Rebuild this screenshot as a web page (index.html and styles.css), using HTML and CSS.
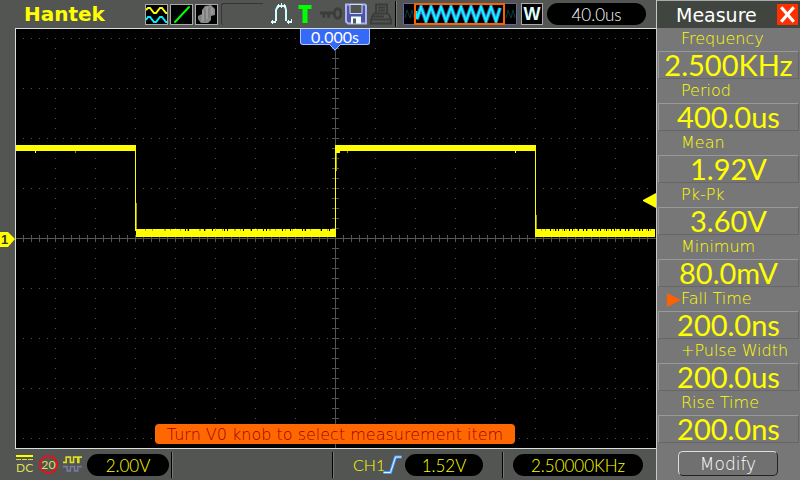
FILE: index.html
```html
<!DOCTYPE html>
<html lang="en">
<head>
<meta charset="utf-8">
<meta name="viewport" content="width=device-width, initial-scale=1">
<title>Hantek oscilloscope</title>
<link rel="stylesheet" href="styles.css">
</head>
<body>
<div class="device">
  <main class="scope">
    <header class="topbar">
      <h1 class="brand">Hantek</h1>
      <div class="tiles">
        <svg class="tile" viewBox="0 0 21 19" aria-label="Channels">
          <path d="M0 5l2-2h2l4 5h2l4-5h2l4 5h1" fill="none" stroke="#ff0" stroke-width="2"/>
          <path d="M0 15l2-3h2l4 5h2l4-5h2l4 5h1" fill="none" stroke="#0ef" stroke-width="2"/>
        </svg>
        <svg class="tile" viewBox="0 0 21 19" aria-label="Vectors"><path d="M4 17L18 2" stroke="#0f0" stroke-width="2" stroke-linecap="round"/></svg>
        <svg class="tile" viewBox="0 0 21 19" aria-label="Persistence">
          <path d="M2 11l4-2V5l3-4 6-1 4 4v6l-4 1v4l-3 3H5l-3-4z" fill="#888"/>
          <path d="M7 6v10M11 2v12M16 3v6" stroke="#999" stroke-width="2"/>
          <path d="M9 5v12M13 3v10M4 11v5" stroke="#777"/>
        </svg>
      </div>
      <span class="slot"></span>
      <div class="status">
        <svg class="icon" viewBox="0 0 22 22" aria-label="Peak detect">
          <path d="M0 19h4M5 18V7l2-4h7l1 4v11M16 19h5" fill="none" stroke="#cff" stroke-width="2"/>
          <path d="M1.500 17v4M4.500 16v4M7.500 1v4M10.500 0v5M13.500 1v4M17.500 17v4M20.500 16v4" stroke="#dff"/>
        </svg>
        <svg class="icon icon-t" viewBox="0 0 13 18" aria-label="Triggered"><path d="M0 0h13v4H9v14H4V4H0z" fill="#0f0"/></svg>
        <svg class="icon" viewBox="0 0 23 14" aria-label="Key lock">
          <path d="M0 6h15M4 7v4M9 7v4" stroke="#3b3d3b" stroke-width="3" fill="none"/>
          <ellipse cx="18.500" cy="6.500" rx="3.500" ry="5" fill="none" stroke="#3b3d3b" stroke-width="3"/>
        </svg>
        <svg class="icon" viewBox="0 0 22 21" aria-label="Save">
          <path d="M1 1h19l1 1v18H3l-2-2z" fill="#5054a4" stroke="#aab4f4" stroke-width="2"/>
          <path d="M5 1h12v9H5z" fill="#535553" stroke="#cdf"/>
          <path d="M6 13h10v7H6z" fill="#eff"/><path d="M8 15h3v5H8z" fill="#555"/>
        </svg>
        <svg class="icon" viewBox="0 0 22 21" aria-label="Print">
          <path d="M6 10V1h11v9M8 4h7M8 7h7M4 10h14l2 3v3H2v-3zM1 16h20v4H1zM3 13h11" fill="none" stroke="#3b3d3b" stroke-width="2"/>
        </svg>
      </div>
      <span class="rule"></span>
      <svg class="memory" viewBox="0 0 114 22" aria-label="Record position">
        <path d="M.5 .5h113v21H.5z" fill="#000" stroke="#6565a5"/>
        <path d="M2 15l2-8 3 8 2-8 2 8M103 15l2-8 3 8 2-8 2 8" fill="none" stroke="#063b46"/>
        <path d="M12 1h90v20H12z" fill="#000"/>
        <path d="M13 8l1 8 4-12 5 14 5-14 5 14 5-14 5 14 5-14 5 14 5-14 5 14 5-14 5 14 5-14 5 14 5-14 5 14 4-13" fill="none" stroke="#4866c8" stroke-width="4"/>
        <path d="M13 8l1 8 4-12 5 14 5-14 5 14 5-14 5 14 5-14 5 14 5-14 5 14 5-14 5 14 5-14 5 14 5-14 5 14 4-13" fill="none" stroke="#0ff" stroke-width="2"/>
        <path d="M12 1h89v20H12z" fill="none" stroke="#ff6000" stroke-width="2"/>
      </svg>
      <span class="window">W</span>
      <output class="pill pill-time">40.0us</output>
    </header>

    <section class="display">
      <svg class="plot" viewBox="0 0 656 421" aria-label="Channel 1 square wave">
        <path d="M15 0h641v421H15z" fill="#000"/>
        <g stroke="#555" fill="none" shape-rendering="crispEdges">
          <path stroke-dasharray="1 7" d="M23 10.500H655M23 60.500H655M23 110.500H655M23 160.500H655M23 260.500H655M23 310.500H655M23 360.500H655M23 410.500H655"/>
          <path stroke-dasharray="1 9" d="M55.500 10V411M95.500 10V411M135.500 10V411M175.500 10V411M215.500 10V411M255.500 10V411M295.500 10V411M375.500 10V411M415.500 10V411M455.500 10V411M495.500 10V411M535.500 10V411M575.500 10V411M615.500 10V411"/>
          <path d="M16 210.500H656M335.500 1V420"/>
          <path stroke-width="7" stroke-dasharray="1 7" d="M23 210.500H655"/>
          <path stroke-width="7" stroke-dasharray="1 9" d="M335.500 10V415"/>
        </g>
        <path d="M15.500 421V.5H656M15 420.500H656" fill="none" stroke="#d8dfd8" shape-rendering="crispEdges"/>
        <g fill="#ff0" shape-rendering="crispEdges">
          <path d="M16 117H136V123H16zM336 117H536V123H336zM136 203H336V209H136zM536 203H655V209H536z"/>
          <path d="M135 117h1v86h-1zM335 117h1v92h-1zM535 117h1v92h-1zM336 123h4v2h-4zM35 123h1v2h-1zM515 123h1v2h-1z"/>
          <path fill="#a09a00" d="M136 175h1v26h-1zM336 125h1v18h-1zM536 187h1v14h-1zM75 123h1v2h-1zM347 123h1v2h-1z"/>
        </g>
        <g fill="none" stroke-width="2" shape-rendering="crispEdges">
          <path stroke="#b8b000" d="M136 202H336M536 202H655"/>
          <path stroke="#ff0" stroke-dasharray="9 1 6 1 11 2 4 1" d="M136 202H336"/>
          <path stroke="#ff0" stroke-dasharray="5 1 3 1 7 1 2 1" d="M536 202H655"/>
          <path stroke="#000" stroke-dasharray="1 2 1 15 1 7 1 11" d="M185 202H334"/>
          <path stroke="#000" stroke-dasharray="1 4 1 2 1 5" d="M550 202H653"/>
        </g>
        <path d="M0 204h8l7 7-7 8H0z" fill="#ff0"/>
        <text class="marker" x="1" y="216">1</text>
        <path d="M656 165v15l-13-7v-1z" fill="#ff0"/>
      </svg>
      <div class="delay">0.000s<svg class="delay-tip" viewBox="0 0 12 7"><path d="M0 0h12L6 7z" fill="#3569f7"/><path d="M0 0l6 6 6-6" fill="none" stroke="#a8c8ff"/></svg></div>
      <p class="message">Turn V0 knob to select measurement item</p>
    </section>

    <footer class="bottombar">
      <div class="channel">
        <svg class="icon" viewBox="0 0 19 19" aria-label="DC coupling">
          <path d="M1 1h17" stroke="#ff0" stroke-width="2"/><path d="M1 4.500h17" stroke="#dd3" stroke-dasharray="5 1"/>
          <text class="dc" x="1" y="17">DC</text>
        </svg>
        <svg class="icon" viewBox="0 0 20 20" aria-label="20 MHz bandwidth limit">
          <circle cx="10" cy="10" r="9" fill="none" stroke="#e8101c" stroke-width="2"/>
          <text class="bw" x="10" y="15" text-anchor="middle">20</text>
        </svg>
        <svg class="icon" viewBox="0 0 18 16" aria-label="Digital filter">
          <path d="M0 6h3V1h4v5h3V1h4v5h1V1h3" fill="none" stroke="#dd2" stroke-width="1.5"/>
          <path d="M0 10h4v4h3v-4h4v4h3v-4h4" fill="none" stroke="#7878a0" stroke-width="1.5"/>
        </svg>
        <output class="pill pill-volts">2.00V</output>
      </div>
      <div class="blank"></div>
      <div class="trigger">
        <span class="source">CH1</span>
        <svg class="icon" viewBox="0 0 18 19" aria-label="Rising edge">
          <path d="M0 17.500h7L12 2h6" fill="none" stroke="#4898ff" stroke-width="3"/>
          <path d="M0 17.500h7L12 2h6" fill="none" stroke="#dff"/>
        </svg>
        <output class="pill pill-level">1.52V</output>
      </div>
      <div class="counter"><output class="pill pill-freq">2.50000KHz</output></div>
    </footer>
  </main>

  <aside class="panel">
    <header class="panel-head">
      <h2 class="panel-title">Measure</h2>
      <button class="close" type="button" aria-label="Close"><svg viewBox="0 0 20 20"><path d="M4 3l12 14M16 3L4 17" stroke="#fff" stroke-width="3"/></svg></button>
    </header>
    <dl class="list">
      <div class="item"><dt>Frequency</dt><dd>2.500KHz</dd></div>
      <div class="item"><dt>Period</dt><dd>400.0us</dd></div>
      <div class="item"><dt>Mean</dt><dd>1.92V</dd></div>
      <div class="item"><dt>Pk-Pk</dt><dd>3.60V</dd></div>
      <div class="item"><dt>Minimum</dt><dd>80.0mV</dd></div>
      <div class="item selected"><dt>Fall Time</dt><dd>200.0ns</dd></div>
      <div class="item"><dt>+Pulse Width</dt><dd>200.0us</dd></div>
      <div class="item"><dt>Rise Time</dt><dd>200.0ns</dd></div>
    </dl>
    <button class="modify" type="button">Modify</button>
  </aside>
</div>
</body>
</html>
```
FILE: styles.css
```css
* { box-sizing: border-box; }

body {
  margin: 0;
  background: #525552;
  color: #ff0;
  font-family: Lato, "Liberation Sans", sans-serif;
}

h1, h2, p, dl, dd { margin: 0; font-weight: normal; }

svg { display: block; flex: none; }

.device {
  display: grid;
  grid-template-columns: 1fr 144px;
  min-height: 100vh;
}

.scope {
  display: grid;
  grid-template-rows: 28px 1fr 31px;
  min-width: 0;
}

/* Top bar */
.topbar {
  display: flex;
  align-items: center;
  padding: 0 10px 0 24px;
}

.brand {
  flex: 1;
  font: bold 20px/24px "DejaVu Sans", sans-serif;
}

.tiles { display: flex; gap: 2px; }

.tile {
  width: 23px;
  height: 21px;
  border: 1px solid #aaa;
  background: #000;
}

.slot {
  width: 42px;
  height: 22px;
  margin: 0 8px 0 3px;
  border: solid #383438;
  border-width: 1px 0 0 1px;
  border-radius: 3px 0 0 3px;
}

.status {
  display: flex;
  align-items: center;
  gap: 3px;
}

.icon { width: 22px; height: 22px; }
.icon-t { width: 18px; height: 18px; margin-right: 3px; }

.rule {
  width: 2px;
  height: 26px;
  margin: 0 6px 0 3px;
  border-left: 1px solid #000;
  border-right: 1px solid #777;
}

.memory { width: 114px; height: 22px; }

.window {
  width: 22px;
  height: 22px;
  margin: 0 4px;
  border: 1px solid #aaa;
  background: #000;
  color: #dff;
  font: bold 18px/20px "Liberation Sans", sans-serif;
  text-align: center;
}

.pill {
  display: block;
  height: 22px;
  border-radius: 11px;
  background: #000;
  font-size: 17px;
  font-weight: 300;
  line-height: 23px;
  text-align: center;
}

.pill-time { width: 99px; color: #fff; }
.pill-volts { width: 82px; }
.pill-level { width: 78px; }
.pill-freq { width: 130px; }

/* Display */
.display { position: relative; }

.plot { width: 100%; height: auto; }

.marker {
  fill: #333;
  font: bold 13px "Liberation Sans", sans-serif;
}

.delay {
  position: absolute;
  top: 1px;
  left: 300px;
  width: 70px;
  height: 16px;
  border: 1px solid #a8c8ff;
  border-top: 0;
  border-radius: 0 0 3px 3px;
  background: #3569f7;
  color: #fff;
  font-size: 16px;
  line-height: 16px;
  text-align: center;
}

.delay-tip {
  position: absolute;
  top: 15px;
  left: 28px;
  width: 12px;
  height: 7px;
}

.message {
  position: absolute;
  bottom: 5px;
  left: 155px;
  width: 360px;
  border-radius: 4px;
  background: #ff6800;
  color: #a00000;
  font: 200 16px/22px "DejaVu Sans Light", "DejaVu Sans ExtraLight", Inter, sans-serif;
  height: 20px;
  text-align: center;
  white-space: nowrap;
}

/* Bottom bar */
.bottombar {
  display: grid;
  grid-template-columns: 171px 161px 170px 1fr;
  align-items: center;
}

.bottombar > div {
  display: flex;
  align-items: center;
  height: 26px;
}

.bottombar > div + div {
  border-left: 1px solid #000;
  box-shadow: inset 1px 0 #777;
}

.channel { gap: 5px; padding-left: 15px; }
.channel .icon { width: 19px; height: 19px; }
.channel .pill { margin-left: auto; margin-right: 2px; }
.trigger { gap: 3px; padding-left: 20px; }
.trigger .icon { width: 19px; height: 19px; }
.counter { padding-left: 10px; }

.source {
  width: 27px;
  font-size: 16px;
  font-weight: 300;
  white-space: nowrap;
}

.dc, .bw {
  fill: #dddd55;
  font: 12px Lato, sans-serif;
}

.bw { font-size: 13px; }

/* Measurement panel */
.panel {
  display: flex;
  flex-direction: column;
  border-left: 1px solid #c8c8c8;
  background: #777;
}

.panel-head {
  display: flex;
  align-items: center;
  justify-content: space-between;
  height: 28px;
  padding: 0 2px 0 19px;
  border-top: 1px solid #aaa;
  background: #40463f;
}

.panel-title {
  color: #fff;
  font: 19px/24px "DejaVu Sans", sans-serif;
}

.close {
  width: 21px;
  height: 21px;
  padding: 0;
  border: 0;
  background: #ff3000;
}

.item {
  height: 52px;
  padding: 0 1px;
}

.item dt {
  position: relative;
  height: 23px;
  padding-left: 23px;
  font: 200 16px/22px "DejaVu Sans Light", "DejaVu Sans ExtraLight", Inter, sans-serif;
  white-space: nowrap;
}

.item dd {
  height: 28px;
  border: 1px solid;
  border-color: #999 #666 #666 #999;
  font-size: 29px;
  line-height: 25px;
  text-align: center;
}

.selected dt::before {
  content: "";
  position: absolute;
  top: 5px;
  left: 9px;
  border: solid transparent;
  border-width: 7px 0 7px 14px;
  border-left-color: #ff6000;
}

.modify {
  width: 100px;
  height: 25px;
  margin: 7px auto 0 21px;
  padding: 0;
  border: 1px solid;
  border-color: #ddd #222 #222 #ddd;
  border-radius: 5px;
  background: #707070;
  color: #fff;
  font: 200 17px/22px "DejaVu Sans Light", "DejaVu Sans ExtraLight", Inter, sans-serif;
}
```
